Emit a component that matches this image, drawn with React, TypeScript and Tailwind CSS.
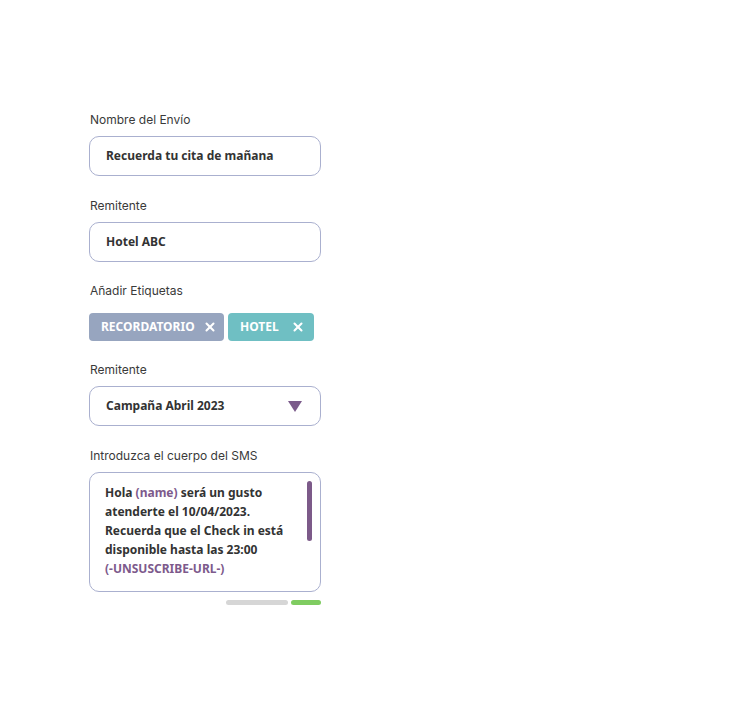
import { X } from 'lucide-react';

const label = 'text-[12px] text-[#3a3a3a] font-["Inter",sans-serif] leading-[12px] pl-px';
const box = 'w-[232px] rounded-[10px] border border-[#aab0cf] bg-white';
const value = 'text-[12px] font-bold text-[#333333] font-["Noto_Sans","Open_Sans",sans-serif]';

export default function App() {
    return (
        <div className="min-h-[703px] w-[750px] bg-white pl-[89px] pt-[114px]">
            <div className="flex flex-col">
                <span className={label}>Nombre del Envío</span>
                <div className={box + ' mt-[10px] flex h-[40px] items-center px-4'}>
                    <span className={value}>Recuerda tu cita de mañana</span>
                </div>

                <span className={label + ' mt-[24px]'}>Remitente</span>
                <div className={box + ' mt-[10px] flex h-[40px] items-center px-4'}>
                    <span className={value}>Hotel ABC</span>
                </div>

                <span className={label + ' mt-[23px]'}>Añadir Etiquetas</span>
                <div className="mt-[16px] flex gap-1">
                    <div className="flex h-[28px] w-[135px] items-center gap-2 rounded-[4px] bg-[#97a5bf] pl-3 text-white">
                        <span className="text-[12px] font-bold font-['Noto_Sans',sans-serif]">RECORDATORIO</span>
                        <X size={14} strokeWidth={3.5} />
                    </div>
                    <div className="flex h-[28px] w-[86px] items-center gap-[12px] rounded-[4px] bg-[#6fbfc3] pl-3 text-white">
                        <span className="text-[12px] font-bold font-['Noto_Sans',sans-serif]">HOTEL</span>
                        <X size={14} strokeWidth={3.5} />
                    </div>
                </div>

                <span className={label + ' mt-[23px]'}>Remitente</span>
                <div className={box + ' mt-[10px] flex h-[40px] items-center justify-between pl-4 pr-[18px]'}>
                    <span className={value}>Campaña Abril 2023</span>
                    <svg width="14" height="11" viewBox="0 0 14 11">
                        <path d="M0 0 H14 L7 11 Z" fill="#7b5b8b" />
                    </svg>
                </div>

                <span className={label + ' mt-[24px]'}>Introduzca el cuerpo del SMS</span>
                <div className={box + ' mt-[10px] flex h-[120px] justify-between pl-[15px] pr-2 pt-[10px]'}>
                    <p className="text-[12px] font-bold text-[#333333] font-['Noto_Sans','Open_Sans',sans-serif] leading-[19px]">
                        Hola <span className="text-[#7d5a8c]">(name)</span> será un gusto
                        <br />
                        atenderte el 10/04/2023.
                        <br />
                        Recuerda que el Check in está
                        <br />
                        disponible hasta las 23:00
                        <br />
                        <span className="text-[#7d5a8c]">(-UNSUSCRIBE-URL-)</span>
                    </p>
                    <div className="mt-[-2px] h-[60px] w-[5px] rounded-full bg-[#7c5a89]" />
                </div>
                <div className="mt-2 flex w-[232px] justify-end gap-[3px]">
                    <div className="h-[5px] w-[62px] rounded-full bg-[#d6d6d6]" />
                    <div className="h-[5px] w-[30px] rounded-full bg-[#7fcc61]" />
                </div>
            </div>
        </div>
    );
}
